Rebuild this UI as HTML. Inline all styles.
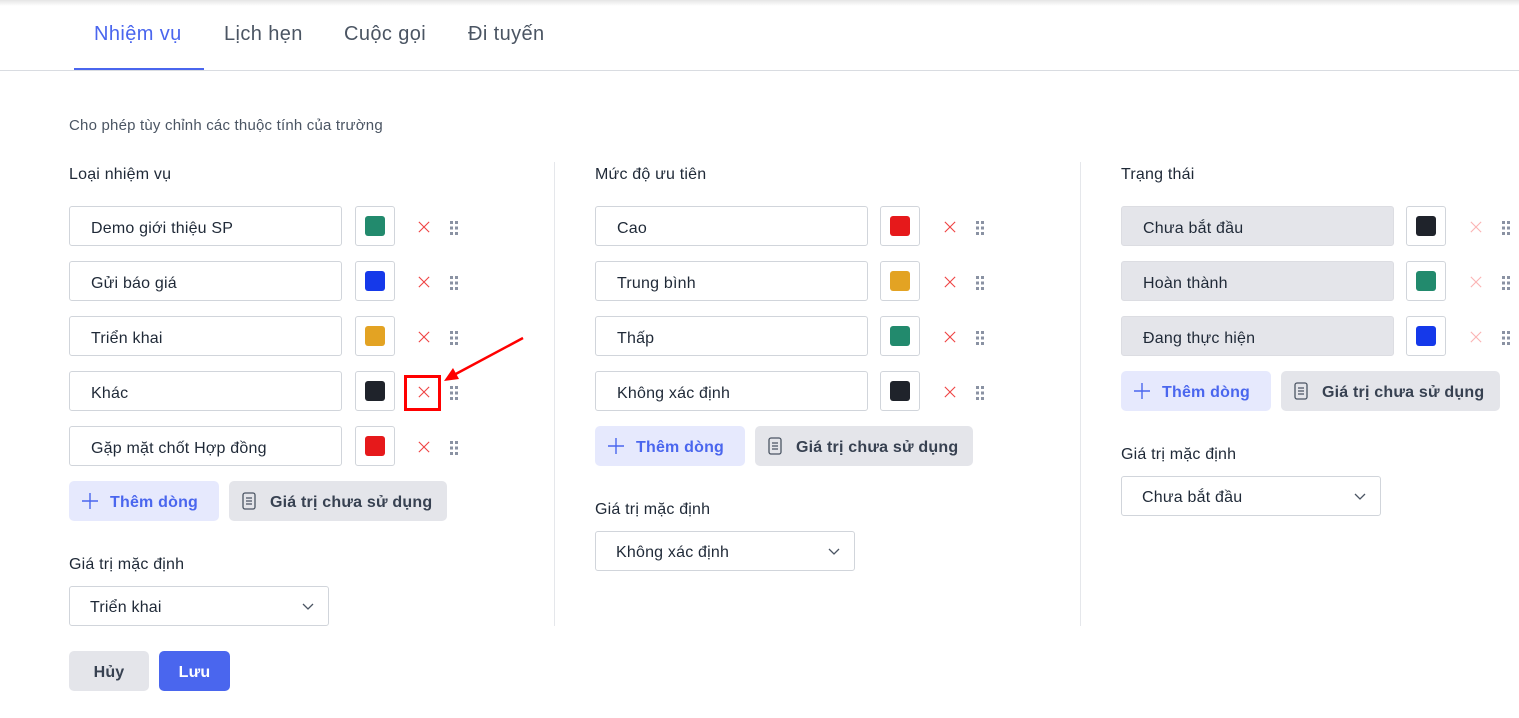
<!DOCTYPE html>
<html><head><meta charset="utf-8"><style>
*{box-sizing:border-box;margin:0;padding:0}
body{width:1519px;height:718px;background:#fff;font-family:"Liberation Sans",sans-serif;color:#1f2937;position:relative;overflow:hidden;letter-spacing:0.2px}
.a{position:absolute}
.shadow{left:0;top:0;width:1519px;height:6px;background:linear-gradient(#e5e5e5,#fff)}
.tab{top:23px;font-size:20px;color:#4b5563;letter-spacing:0.4px}
.inp{width:273px;height:40px;border:1px solid #d1d5db;border-radius:3px;font-size:16px;padding-left:21px;line-height:38px;padding-top:3px;color:#1f2937}
.inp.g{background:#e4e5ea;border-color:#dcdde2}
.cb{width:40px;height:40px;border:1px solid #d1d5db;border-radius:3px}
.cb i{position:absolute;left:9px;top:9px;width:20px;height:20px;border-radius:3px}
.lbl{font-size:16px;color:#1f2937}
.btn{height:40px;border-radius:5px;font-size:16px;line-height:40px;padding-top:2px;font-weight:bold}
.add{width:150px;background:#e6e9fd;color:#4a66ee;padding-left:41px}
.unused{width:218px;background:#e4e5ea;color:#374151;padding-left:41px}
.sel{width:260px;height:40px;border:1px solid #d1d5db;border-radius:3px;font-size:16px;line-height:38px;padding-top:2px;padding-left:20px}
.sep{width:1px;background:#e5e7eb;top:162px;height:464px}
</style></head><body>
<div class="a shadow"></div>
<div class="a tab" style="left:94px;color:#4a66ee">Nhiệm vụ</div>
<div class="a tab" style="left:224px">Lịch hẹn</div>
<div class="a tab" style="left:344px">Cuộc gọi</div>
<div class="a tab" style="left:468px">Đi tuyến</div>
<div class="a" style="left:0;top:70px;width:1519px;height:1px;background:#d9dce1"></div>
<div class="a" style="left:74px;top:68px;width:130px;height:2px;background:#4a66ee"></div>
<div class="a" style="left:69px;top:117px;font-size:15px;color:#4b5563">Cho phép tùy chỉnh các thuộc tính của trường</div>
<div class="a sep" style="left:554px"></div>
<div class="a sep" style="left:1080px"></div>

<svg width="0" height="0" style="position:absolute"><defs>
<symbol id="x" viewBox="0 0 14 14"><path d="M1 1L13 13M13 1L1 13" stroke="currentColor" stroke-width="1.3"/></symbol>
<symbol id="d" viewBox="0 0 8 14"><g fill="#8a92a3"><rect x="0" y="0" width="3" height="3"/><rect x="5" y="0" width="3" height="3"/><rect x="0" y="5.5" width="3" height="3"/><rect x="5" y="5.5" width="3" height="3"/><rect x="0" y="11" width="3" height="3"/><rect x="5" y="11" width="3" height="3"/></g></symbol>
<symbol id="p" viewBox="0 0 16 16"><path d="M8 0V16M0 8H16" stroke="#4a66ee" stroke-width="1.4"/></symbol>
<symbol id="f" viewBox="0 0 14 18"><rect x="1" y="1" width="12" height="16" rx="2" fill="none" stroke="#4b5563" stroke-width="1.3"/><path d="M4 6H10M4 9H10M4 12H10" stroke="#4b5563" stroke-width="1.2"/></symbol>
<symbol id="c" viewBox="0 0 12 8"><path d="M1 1L6 6L11 1" fill="none" stroke="#4b5563" stroke-width="1.3"/></symbol>
</defs></svg>

<!-- col1 -->
<div class="a lbl" style="left:69px;top:166px">Loại nhiệm vụ</div>
<div class="a inp" style="left:69px;top:206px">Demo giới thiệu SP</div><div class="a cb" style="left:355px;top:206px"><i style="background:#228a6d"></i></div>
<div class="a inp" style="left:69px;top:261px">Gửi báo giá</div><div class="a cb" style="left:355px;top:261px"><i style="background:#1539ea"></i></div>
<div class="a inp" style="left:69px;top:316px">Triển khai</div><div class="a cb" style="left:355px;top:316px"><i style="background:#e3a323"></i></div>
<div class="a inp" style="left:69px;top:371px">Khác</div><div class="a cb" style="left:355px;top:371px"><i style="background:#1f232b"></i></div>
<div class="a inp" style="left:69px;top:426px">Gặp mặt chốt Hợp đồng</div><div class="a cb" style="left:355px;top:426px"><i style="background:#e6191b"></i></div>
<svg class="a" style="left:418px;top:221px;color:#ef4444" width="12" height="12"><use href="#x"/></svg>
<svg class="a" style="left:418px;top:276px;color:#ef4444" width="12" height="12"><use href="#x"/></svg>
<svg class="a" style="left:418px;top:331px;color:#ef4444" width="12" height="12"><use href="#x"/></svg>
<svg class="a" style="left:418px;top:386px;color:#ef4444" width="12" height="12"><use href="#x"/></svg>
<svg class="a" style="left:418px;top:441px;color:#ef4444" width="12" height="12"><use href="#x"/></svg>
<svg class="a" style="left:450px;top:221px" width="8" height="14"><use href="#d"/></svg>
<svg class="a" style="left:450px;top:276px" width="8" height="14"><use href="#d"/></svg>
<svg class="a" style="left:450px;top:331px" width="8" height="14"><use href="#d"/></svg>
<svg class="a" style="left:450px;top:386px" width="8" height="14"><use href="#d"/></svg>
<svg class="a" style="left:450px;top:441px" width="8" height="14"><use href="#d"/></svg>
<div class="a" style="left:404px;top:375px;width:37px;height:36px;border:3px solid #f00"></div>
<svg class="a" style="left:440px;top:335px" width="90" height="50"><path d="M83 3L12 41" stroke="#f00" stroke-width="2.5"/><path d="M4 46L13 33L19 44Z" fill="#f00"/></svg>
<div class="a btn add" style="left:69px;top:481px">Thêm dòng</div><svg class="a" style="left:82px;top:493px" width="16" height="16"><use href="#p"/></svg>
<div class="a btn unused" style="left:229px;top:481px">Giá trị chưa sử dụng</div><svg class="a" style="left:242px;top:492px" width="14" height="18"><use href="#f"/></svg>
<div class="a lbl" style="left:69px;top:556px">Giá trị mặc định</div>
<div class="a sel" style="left:69px;top:586px">Triển khai</div><svg class="a" style="left:302px;top:603px" width="12" height="8"><use href="#c"/></svg>

<!-- col2 -->
<div class="a lbl" style="left:595px;top:166px">Mức độ ưu tiên</div>
<div class="a inp" style="left:595px;top:206px">Cao</div><div class="a cb" style="left:880px;top:206px"><i style="background:#e6191b"></i></div>
<div class="a inp" style="left:595px;top:261px">Trung bình</div><div class="a cb" style="left:880px;top:261px"><i style="background:#e3a323"></i></div>
<div class="a inp" style="left:595px;top:316px">Thấp</div><div class="a cb" style="left:880px;top:316px"><i style="background:#228a6d"></i></div>
<div class="a inp" style="left:595px;top:371px">Không xác định</div><div class="a cb" style="left:880px;top:371px"><i style="background:#1f232b"></i></div>
<svg class="a" style="left:944px;top:221px;color:#ef4444" width="12" height="12"><use href="#x"/></svg>
<svg class="a" style="left:944px;top:276px;color:#ef4444" width="12" height="12"><use href="#x"/></svg>
<svg class="a" style="left:944px;top:331px;color:#ef4444" width="12" height="12"><use href="#x"/></svg>
<svg class="a" style="left:944px;top:386px;color:#ef4444" width="12" height="12"><use href="#x"/></svg>
<svg class="a" style="left:976px;top:221px" width="8" height="14"><use href="#d"/></svg>
<svg class="a" style="left:976px;top:276px" width="8" height="14"><use href="#d"/></svg>
<svg class="a" style="left:976px;top:331px" width="8" height="14"><use href="#d"/></svg>
<svg class="a" style="left:976px;top:386px" width="8" height="14"><use href="#d"/></svg>
<div class="a btn add" style="left:595px;top:426px">Thêm dòng</div><svg class="a" style="left:608px;top:438px" width="16" height="16"><use href="#p"/></svg>
<div class="a btn unused" style="left:755px;top:426px">Giá trị chưa sử dụng</div><svg class="a" style="left:768px;top:437px" width="14" height="18"><use href="#f"/></svg>
<div class="a lbl" style="left:595px;top:501px">Giá trị mặc định</div>
<div class="a sel" style="left:595px;top:531px">Không xác định</div><svg class="a" style="left:828px;top:548px" width="12" height="8"><use href="#c"/></svg>

<!-- col3 -->
<div class="a lbl" style="left:1121px;top:166px">Trạng thái</div>
<div class="a inp g" style="left:1121px;top:206px">Chưa bắt đầu</div><div class="a cb" style="left:1406px;top:206px"><i style="background:#1f232b"></i></div>
<div class="a inp g" style="left:1121px;top:261px">Hoàn thành</div><div class="a cb" style="left:1406px;top:261px"><i style="background:#228a6d"></i></div>
<div class="a inp g" style="left:1121px;top:316px">Đang thực hiện</div><div class="a cb" style="left:1406px;top:316px"><i style="background:#1539ea"></i></div>
<svg class="a" style="left:1470px;top:221px;color:#fbb4b4" width="12" height="12"><use href="#x"/></svg>
<svg class="a" style="left:1470px;top:276px;color:#fbb4b4" width="12" height="12"><use href="#x"/></svg>
<svg class="a" style="left:1470px;top:331px;color:#fbb4b4" width="12" height="12"><use href="#x"/></svg>
<svg class="a" style="left:1502px;top:221px" width="8" height="14"><use href="#d"/></svg>
<svg class="a" style="left:1502px;top:276px" width="8" height="14"><use href="#d"/></svg>
<svg class="a" style="left:1502px;top:331px" width="8" height="14"><use href="#d"/></svg>
<div class="a btn add" style="left:1121px;top:371px">Thêm dòng</div><svg class="a" style="left:1134px;top:383px" width="16" height="16"><use href="#p"/></svg>
<div class="a btn unused" style="left:1281px;top:371px;width:219px">Giá trị chưa sử dụng</div><svg class="a" style="left:1294px;top:382px" width="14" height="18"><use href="#f"/></svg>
<div class="a lbl" style="left:1121px;top:446px">Giá trị mặc định</div>
<div class="a sel" style="left:1121px;top:476px">Chưa bắt đầu</div><svg class="a" style="left:1354px;top:493px" width="12" height="8"><use href="#c"/></svg>

<div class="a btn" style="left:69px;top:651px;width:80px;background:#e4e5ea;color:#374151;text-align:center">Hủy</div>
<div class="a btn" style="left:159px;top:651px;width:71px;background:#4a66ee;color:#fff;text-align:center">Lưu</div>
</body></html>
